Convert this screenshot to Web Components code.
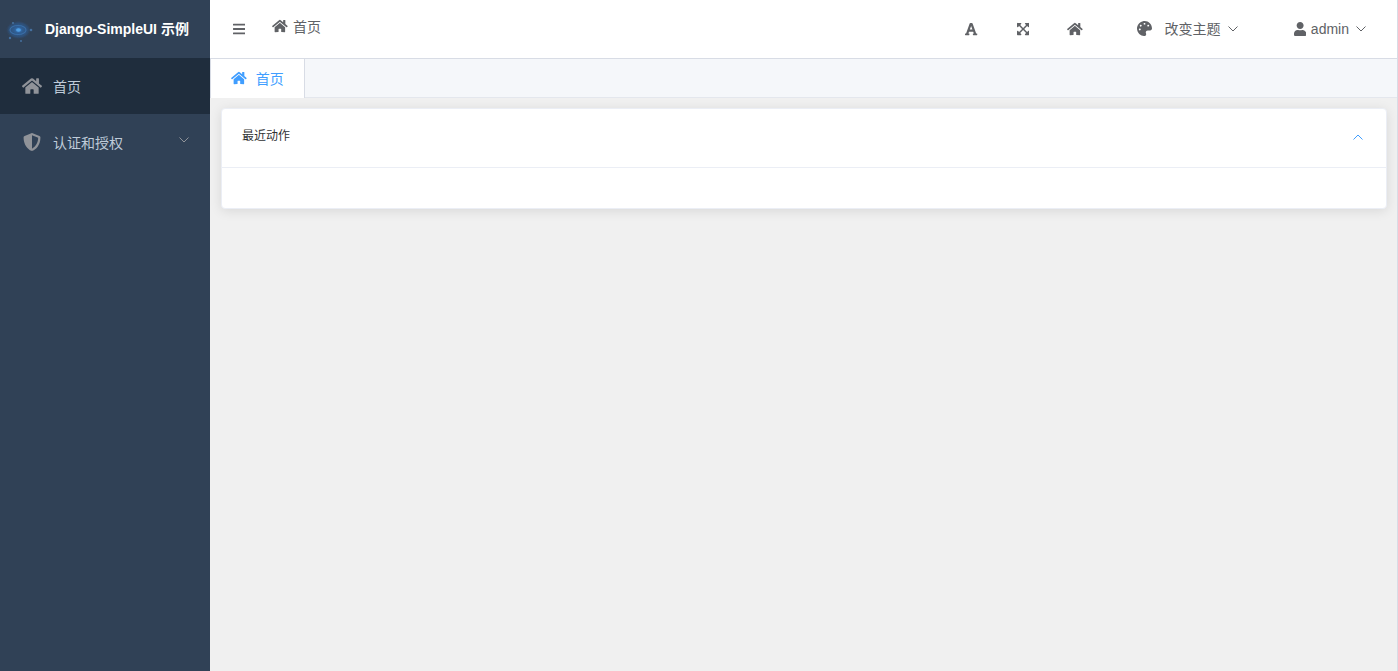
<!DOCTYPE html>
<html lang="zh-CN"><head><meta charset="utf-8"><title>Django-SimpleUI</title>
<style>
html,body{margin:0;height:100%;overflow:hidden}
body{font-family:"Liberation Sans","Noto Sans CJK SC",sans-serif;font-size:14px}
</style></head><body>
<su-app>
  <su-sidebar slot="side" title-text="Django-SimpleUI 示例">
    <su-menu-item icon="home" active>首页</su-menu-item>
    <su-menu-item icon="shield" arrow>认证和授权</su-menu-item>
  </su-sidebar>
  <su-topbar slot="top"></su-topbar>
  <su-tabs slot="tabs"><su-tab icon="home">首页</su-tab></su-tabs>
  <su-panel heading="最近动作"></su-panel>
</su-app>
<script>
const P={
home:[576,"M280.37 148.26L96 300.11V464a16 16 0 0 0 16 16l112.06-.29a16 16 0 0 0 15.92-16V368a16 16 0 0 1 16-16h64a16 16 0 0 1 16 16v95.64a16 16 0 0 0 16 16.05L464 480a16 16 0 0 0 16-16V300L295.67 148.26a12.19 12.19 0 0 0-15.3 0zM571.6 251.47L488 182.56V44.05a12 12 0 0 0-12-12h-56a12 12 0 0 0-12 12v72.61L318.47 43a48 48 0 0 0-61 0L4.34 251.47a12 12 0 0 0-1.6 16.9l25.5 31A12 12 0 0 0 45.15 301l235.22-193.74a12.19 12.19 0 0 1 15.3 0L530.9 301a12 12 0 0 0 16.9-1.6l25.5-31a12 12 0 0 0-1.7-16.93z"],
shield:[512,"M466.5 83.7l-192-80a48.15 48.15 0 0 0-36.9 0l-192 80C27.7 91.1 16 108.6 16 128c0 198.5 114.5 335.7 221.5 380.3 11.8 4.9 25.1 4.9 36.9 0C360.1 472.6 496 349.3 496 128c0-19.4-11.7-36.9-29.5-44.3zM256.1 446.3l-.1-381 175.9 73.3c-3.3 151.4-82.1 261.1-175.8 307.7z"],
bars:[448,"M16 132h416c8.837 0 16-7.163 16-16V76c0-8.837-7.163-16-16-16H16C7.163 60 0 67.163 0 76v40c0 8.837 7.163 16 16 16zm0 160h416c8.837 0 16-7.163 16-16v-40c0-8.837-7.163-16-16-16H16c-8.837 0-16 7.163-16 16v40c0 8.837 7.163 16 16 16zm0 160h416c8.837 0 16-7.163 16-16v-40c0-8.837-7.163-16-16-16H16c-8.837 0-16 7.163-16 16v40c0 8.837 7.163 16 16 16z"],
font:[448,"M432 416h-23.41L277.88 53.69A32 32 0 0 0 247.58 32h-47.16a32 32 0 0 0-30.3 21.69L39.41 416H16a16 16 0 0 0-16 16v32a16 16 0 0 0 16 16h128a16 16 0 0 0 16-16v-32a16 16 0 0 0-16-16h-19.58l23.3-64h152.56l23.3 64H304a16 16 0 0 0-16 16v32a16 16 0 0 0 16 16h128a16 16 0 0 0 16-16v-32a16 16 0 0 0-16-16zM176.85 272L224 142.51 271.15 272z"],
expand:[448,"M448 344v112a23.94 23.94 0 0 1-24 24H312c-21.39 0-32.09-25.9-17-41l36.2-36.2L224 295.6 116.77 402.9 153 439c15.09 15.1 4.39 41-17 41H24a23.94 23.94 0 0 1-24-24V344c0-21.4 25.89-32.1 41-17l36.19 36.2L184.46 256 77.18 148.7 41 185c-15.1 15.1-41 4.4-41-17V56a23.94 23.94 0 0 1 24-24h112c21.39 0 32.09 25.9 17 41l-36.2 36.2L224 216.4l107.23-107.3L295 73c-15.09-15.1-4.39-41 17-41h112a23.94 23.94 0 0 1 24 24v112c0 21.4-25.89 32.1-41 17l-36.19-36.2L263.54 256l107.28 107.3L407 327.1c15.1-15.2 41-4.5 41 16.9z"],
palette:[512,"M204.3 5C104.9 24.4 24.8 104.3 5.2 203.4c-37 187 131.7 326.4 258.8 306.7 41.2-6.4 61.4-54.6 42.5-91.7-23.1-45.4 9.9-98.4 60.9-98.4h79.7c35.8 0 64.8-29.6 64.9-65.3C511.5 97.1 368.1-26.9 204.3 5zM96 320c-17.7 0-32-14.3-32-32s14.3-32 32-32 32 14.3 32 32-14.3 32-32 32zm32-128c-17.7 0-32-14.3-32-32s14.3-32 32-32 32 14.3 32 32-14.3 32-32 32zm128-64c-17.7 0-32-14.3-32-32s14.3-32 32-32 32 14.3 32 32-14.3 32-32 32zm128 64c-17.7 0-32-14.3-32-32s14.3-32 32-32 32 14.3 32 32-14.3 32-32 32z"],
user:[448,"M224 256c70.7 0 128-57.3 128-128S294.7 0 224 0 96 57.3 96 128s57.3 128 128 128zm89.6 32h-16.7c-22.2 10.2-46.9 16-72.9 16s-50.6-5.8-72.9-16h-16.7C60.2 288 0 348.2 0 422.4V464c0 26.5 21.5 48 48 48h352c26.5 0 48-21.5 48-48v-41.6c0-74.2-60.2-134.4-134.4-134.4z"]
};
function define(name,html){
  const t=document.createElement('template');t.innerHTML=html;
  customElements.define(name,class extends HTMLElement{
    connectedCallback(){
      if(!this.shadowRoot)this.attachShadow({mode:'open'}).appendChild(t.content.cloneNode(true));
    }
  });
}
customElements.define('su-icon',class extends HTMLElement{
  connectedCallback(){
    if(this.shadowRoot)return;
    const [w,d]=P[this.getAttribute('name')];const s=+this.getAttribute('size')||14;
    this.attachShadow({mode:'open'}).innerHTML=`<style>:host{display:block;flex:none;line-height:0}svg{display:block;fill:currentColor}</style><svg width="${s*w/512}" height="${s}" viewBox="0 0 ${w} 512"><path d="${d}"/></svg>`;
  }
});
customElements.define('su-chevron',class extends HTMLElement{
  connectedCallback(){
    if(this.shadowRoot)return;
    const up=this.hasAttribute('up');
    this.attachShadow({mode:'open'}).innerHTML=`<style>:host{display:block;flex:none;line-height:0}svg{display:block;fill:none;stroke:currentColor;stroke-width:1}</style><svg width="10" height="6" viewBox="0 0 10 6"><path d="${up?'M.5 5.5 5 1l4.5 4.5':'M.5.5 5 5l4.5-4.5'}"/></svg>`;
  }
});
define('su-app',`<style>
:host{display:grid;grid-template-columns:210px 1fr;grid-template-rows:59px 39px 1fr;height:671px;background:#f0f0f0;box-sizing:border-box;border-right:1px solid #d8dce5}
.side{grid-row:1/4;min-height:0;display:flex}.top{grid-column:2}.tabs{grid-column:2}
.main{grid-column:2;padding:10px 10px 11px 11px;min-height:0}
</style><div class="side"><slot name="side"></slot></div><div class="top"><slot name="top"></slot></div><div class="tabs"><slot name="tabs"></slot></div><div class="main"><slot></slot></div>`);
customElements.define('su-sidebar',class extends HTMLElement{
  connectedCallback(){
    if(this.shadowRoot)return;
    this.attachShadow({mode:'open'}).innerHTML=`<style>
:host{display:block;width:210px;background:#304156}
.logo{height:58px;display:flex;align-items:center;box-sizing:border-box;padding:0 0 2px 4px;gap:12px;color:#fff;font-weight:700;font-size:14px;white-space:nowrap}
svg{display:block;flex:none;margin-top:4px}
</style><div class="logo"><svg width="29" height="26" viewBox="0 0 29 26"><defs><radialGradient id="g"><stop offset="0" stop-color="#3f86cf"/><stop offset=".3" stop-color="#2f5f96"/><stop offset=".75" stop-color="#2f5079" stop-opacity=".85"/><stop offset="1" stop-color="#304156" stop-opacity="0"/></radialGradient><filter id="b" x="-20%" y="-20%" width="140%" height="140%"><feGaussianBlur stdDeviation=".6"/></filter></defs><g filter="url(#b)"><ellipse cx="14.5" cy="13" rx="13" ry="9.5" fill="url(#g)"/><ellipse cx="14" cy="13" rx="8" ry="4.5" fill="none" stroke="#3d76b4" stroke-width="1.2" opacity=".7"/><ellipse cx="14.5" cy="13" rx="2.4" ry="1.8" fill="#4f9fe4"/><circle cx="27" cy="13" r="1.3" fill="#44709f"/><circle cx="6" cy="21" r="1.2" fill="#44709f"/><circle cx="17" cy="24" r="1" fill="#44709f"/><circle cx="9" cy="6" r="1.1" fill="#44709f"/></g></svg><span>${this.getAttribute('title-text')}</span></div><slot></slot>`;
  }
});
customElements.define('su-menu-item',class extends HTMLElement{
  connectedCallback(){
    if(this.shadowRoot)return;
    const a=this.hasAttribute('arrow');
    this.attachShadow({mode:'open'}).innerHTML=`<style>
:host{display:flex;align-items:center;height:56px;padding-left:22px;padding-right:21px;box-sizing:border-box;color:#bfcbd9;font-size:14px}
:host([active]){background:#1f2d3d}
su-icon{color:#909399;width:20px;margin-right:11px;display:flex;justify-content:center}
span{flex:1}su-chevron{color:#909399;margin-top:-4px}
</style><su-icon name="${this.getAttribute('icon')}" size="18"></su-icon><span><slot></slot></span>${a?'<su-chevron></su-chevron>':''}`;
  }
});
define('su-topbar',`<style>
:host{display:flex;align-items:center;height:59px;box-sizing:border-box;background:#fff;border-bottom:1px solid #d8dce5;color:#606266;font-size:14px;white-space:nowrap}
.bars{margin-left:23px;margin-top:-1px}
.crumb{display:flex;align-items:center;gap:5px;margin-left:27px;margin-top:-6px;flex:1}
.crumb su-icon{margin-top:-1px}
.r{display:flex;align-items:center;margin-right:30px;margin-top:-1px}
.cjk{margin-top:-2px}
</style>
<su-icon class="bars" name="bars" size="14"></su-icon>
<div class="crumb"><su-icon name="home" size="14"></su-icon><span>首页</span></div>
<div class="r">
<su-icon name="font" size="14"></su-icon>
<su-icon name="expand" size="14" style="margin-left:39px"></su-icon>
<su-icon name="home" size="14" style="margin-left:38px"></su-icon>
<su-icon name="palette" size="15" style="margin-left:54px"></su-icon>
<span class="cjk" style="margin-left:13px">改变主题</span><su-chevron style="margin-left:7px"></su-chevron>
<su-icon name="user" size="14" style="margin-left:56px"></su-icon>
<span style="margin-left:5px">admin</span><su-chevron style="margin-left:7px;margin-right:1px"></su-chevron>
</div>`);
define('su-tabs',`<style>:host{display:flex;height:39px;box-sizing:border-box;background:#f5f7fa;border-bottom:1px solid #e4e7ed}</style><slot></slot>`);
customElements.define('su-tab',class extends HTMLElement{
  connectedCallback(){
    if(this.shadowRoot)return;
    this.attachShadow({mode:'open'}).innerHTML=`<style>
:host{display:flex;align-items:center;height:39px;box-sizing:border-box;width:95px;padding:0 0 2px 20px;gap:9px;background:#fff;color:#409eff;font-size:14px;border-right:1px solid #d8dce5;border-left:1px solid #d8dce5}
</style><su-icon name="${this.getAttribute('icon')}" size="14"></su-icon><span><slot></slot></span>`;
  }
});
customElements.define('su-panel',class extends HTMLElement{
  connectedCallback(){
    if(this.shadowRoot)return;
    this.attachShadow({mode:'open'}).innerHTML=`<style>
:host{display:block;background:#fff;border-radius:4px;border:1px solid #ebeef5;box-shadow:0 2px 12px 0 rgba(0,0,0,.1);box-sizing:border-box;height:101px;color:#303133;overflow:hidden}
.h{display:flex;align-items:center;justify-content:space-between;height:59px;box-sizing:border-box;padding:0 23px 7px 20px;border-bottom:1px solid #ebeef5;font-size:12px}
su-chevron{color:#409eff;margin-top:5px}
</style><div class="h"><span>${this.getAttribute('heading')}</span><su-chevron up></su-chevron></div>`;
  }
});
</script>
</body></html>
